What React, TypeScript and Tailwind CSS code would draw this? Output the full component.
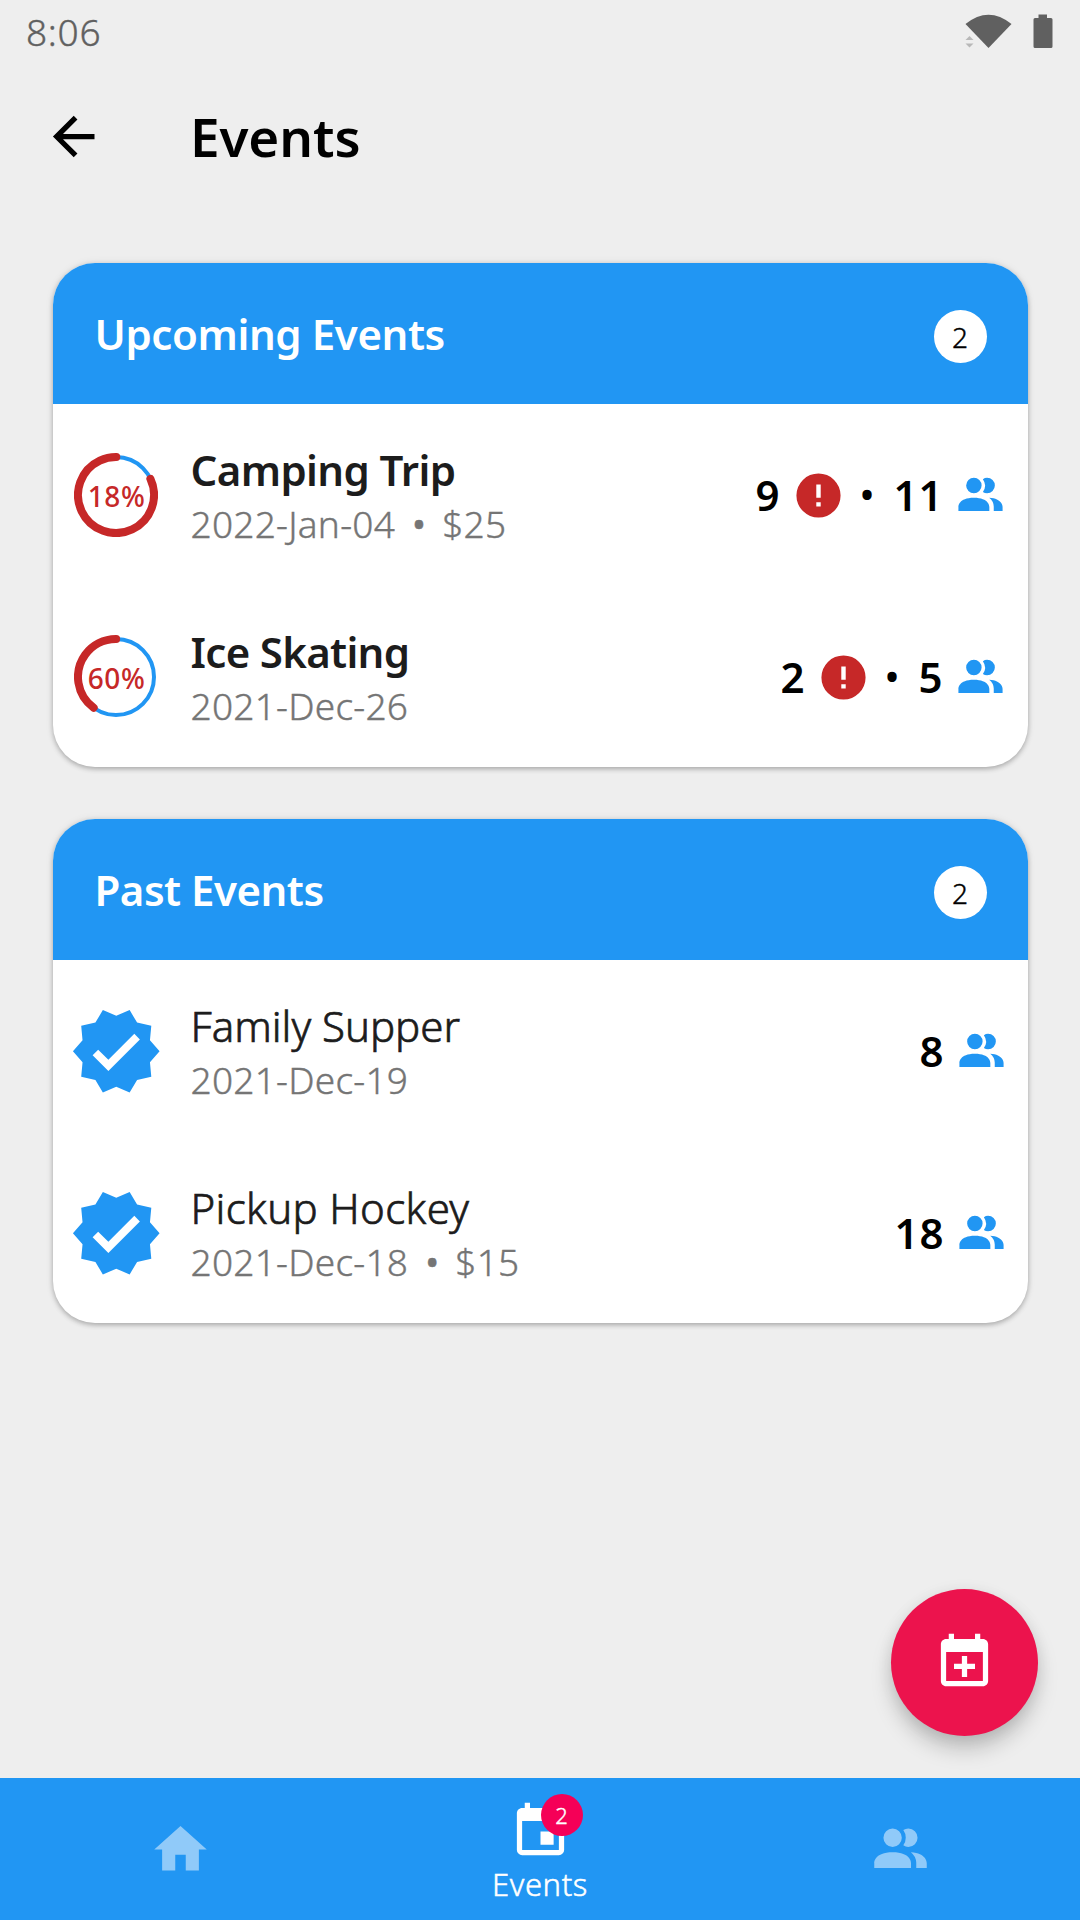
type IconProps = { path: string; className?: string };

const ICONS = {
  back: "M20,11V13H8L13.5,18.5L12.08,19.92L4.16,12L12.08,4.08L13.5,5.5L8,11H20Z",
  people:
    "M16 17V19H2V17S2 13 9 13 16 17 16 17M12.5 7.5A3.5 3.5 0 1 0 9 11A3.5 3.5 0 0 0 12.5 7.5M15.94 13A5.32 5.32 0 0 1 18 17V19H22V17S22 13.37 15.94 13M15 4A3.39 3.39 0 0 0 13.07 4.59A5 5 0 0 1 13.07 10.41A3.39 3.39 0 0 0 15 11A3.5 3.5 0 0 0 15 4Z",
  alert:
    "M13,13H11V7H13M13,17H11V15H13M12,2A10,10 0 0,0 2,12A10,10 0 0,0 12,22A10,10 0 0,0 22,12A10,10 0 0,0 12,2Z",
  verified:
    "M23,12L20.56,9.22L20.9,5.54L17.29,4.72L15.4,1.54L12,3L8.6,1.54L6.71,4.72L3.1,5.53L3.44,9.21L1,12L3.44,14.78L3.1,18.47L6.71,19.29L8.6,22.47L12,21L15.4,22.46L17.29,19.28L20.9,18.46L20.56,14.78L23,12M10,17L6,13L7.41,11.59L10,14.17L16.59,7.58L18,9L10,17Z",
  home: "M10,20V14H14V20H19V12H22L12,3L2,12H5V20H10Z",
  calendar:
    "M19,19H5V8H19M16,1V3H8V1H6V3H5C3.89,3 3,3.89 3,5V19A2,2 0 0,0 5,21H19A2,2 0 0,0 21,19V5C21,3.89 20.1,3 19,3H18V1M17,12H12V17H17V12Z",
  calendarPlus:
    "M19 19V8H5V19H19M16 1H18V3H19C20.11 3 21 3.9 21 5V19C21 20.11 20.11 21 19 21H5C3.89 21 3 20.1 3 19V5C3 3.89 3.89 3 5 3H6V1H8V3H16V1M11 9.5H13V12.5H16V14.5H13V17.5H11V14.5H8V12.5H11V9.5Z",
};

function Icon({ path, className = "" }: IconProps) {
  return (
    <svg viewBox="0 0 24 24" fill="currentColor" fillRule="evenodd" className={`shrink-0 ${className}`}>
      <path d={path} />
    </svg>
  );
}

type EventItem = {
  title: string;
  titleClass: string;
  date: string;
  price?: string;
  progress?: number;
  pending?: number;
  people: number;
};

const UPCOMING: EventItem[] = [
  {
    title: "Camping Trip",
    titleClass: "font-semibold tracking-[-0.6px]",
    date: "2022-Jan-04",
    price: "$25",
    progress: 18,
    pending: 9,
    people: 11,
  },
  {
    title: "Ice Skating",
    titleClass: "font-semibold tracking-[-0.7px]",
    date: "2021-Dec-26",
    progress: 60,
    pending: 2,
    people: 5,
  },
];

const PAST: EventItem[] = [
  {
    title: "Family Supper",
    titleClass: "font-light [-webkit-text-stroke:0.7px]",
    date: "2021-Dec-19",
    people: 8,
  },
  {
    title: "Pickup Hockey",
    titleClass: "font-light tracking-[0.35px] [-webkit-text-stroke:0.7px]",
    date: "2021-Dec-18",
    price: "$15",
    people: 18,
  },
];

function ProgressRing({ value }: { value: number }) {
  const circumference = 2 * Math.PI * 38;
  const rest = circumference * (1 - value / 100);
  return (
    <div className="grid size-[84px] shrink-0 place-items-center">
      <svg viewBox="0 0 84 84" fill="none" className="col-start-1 row-start-1 size-[84px]">
        <circle cx="42" cy="42" r="38" stroke="#2196f3" strokeWidth="4" />
        <circle
          cx="42"
          cy="42"
          r="38"
          stroke="#c62828"
          strokeWidth="8"
          strokeLinecap="round"
          strokeDasharray={`${rest} ${circumference}`}
          transform={`rotate(${-90 + value * 3.6} 42 42)`}
        />
      </svg>
      <span className="col-start-1 row-start-1 pt-px pl-[2px] text-[28px] leading-[40px] font-medium tracking-[0.6px] text-[#c62828]">
        {value}%
      </span>
    </div>
  );
}

function EventRow({ item }: { item: EventItem }) {
  const done = item.progress === undefined;
  return (
    <li className={`flex h-[182px] items-center pl-[16px] ${done ? "pr-[20px]" : "pr-[21px]"}`}>
      <div className="flex w-[122px] shrink-0 items-center">
        {item.progress !== undefined ? (
          <div className="pl-[5px]">
            <ProgressRing value={item.progress} />
          </div>
        ) : (
          <Icon path={ICONS.verified} className="size-[94.5px] text-[#2196f3]" />
        )}
      </div>
      <div className="flex flex-col pt-[2px]">
        <span className={`text-[42px] leading-[56px] text-[#1c1c1c] ${item.titleClass}`}>{item.title}</span>
        <span className="flex text-[37px] leading-[52px] font-light tracking-[0.25px] text-[#757575] [-webkit-text-stroke:0.4px]">
          <span>{item.date}</span>
          {item.price && (
            <>
              <span className="mr-[16px] ml-[17px] font-normal">•</span>
              <span>{item.price}</span>
            </>
          )}
        </span>
      </div>
      <div className="ml-auto flex items-center text-[42px] leading-[56px] font-semibold tracking-[1px] text-black">
        {item.pending !== undefined && (
          <>
            <span>{item.pending}</span>
            <Icon path={ICONS.alert} className="ml-[12px] size-[53px] text-[#c62828]" />
            <span className="mr-[18px] ml-[13px] w-[17px] text-center text-[36px] tracking-normal">•</span>
          </>
        )}
        <span>{item.people}</span>
        <Icon path={ICONS.people} className="ml-[10px] size-[53px] text-[#2196f3]" />
      </div>
    </li>
  );
}

function EventCard({ title, titleClass, items }: { title: string; titleClass: string; items: EventItem[] }) {
  return (
    <section className="overflow-hidden rounded-[42px] bg-white shadow-[0_2px_5px_rgba(0,0,0,0.26),0_0_8px_rgba(0,0,0,0.08)]">
      <header className="flex h-[141px] items-center justify-between bg-[#2196f3] pr-[41px] pl-[42px]">
        <h2 className={`pt-px text-[42px] leading-[56px] font-semibold text-white ${titleClass}`}>{title}</h2>
        <span className="mt-[6px] flex size-[53px] items-center justify-center rounded-full bg-white text-[28px] leading-[40px] font-light text-black [-webkit-text-stroke:0.4px]">
          {items.length}
        </span>
      </header>
      <ul className="h-[363px]">
        {items.map((item) => (
          <EventRow key={item.title} item={item} />
        ))}
      </ul>
    </section>
  );
}

function StatusBar() {
  return (
    <div className="flex h-[63px] items-center justify-between pr-[26px] pl-[26px] text-[#606060]">
      <span className="pt-px text-[37px] leading-[50px] font-light tracking-[0.7px] [-webkit-text-stroke:0.4px]">8:06</span>
      <svg viewBox="0 0 90 36" className="h-[36px] w-[90px]">
        <path d="M1.500 10Q24.500 -8.500 47.500 10L24.500 34Z" fill="#606060" />
        <path d="M1.500 26L5.500 22L9.500 26ZM1.500 29.500H9.500L5.500 33.500Z" fill="#b8b8b8" />
        <path d="M74.500 0.500H83V4H87Q88.500 4 88.500 5.500V32.500Q88.500 34 87 34H71Q69.500 34 69.500 32.500V5.500Q69.500 4 71 4H74.500Z" fill="#606060" />
      </svg>
    </div>
  );
}

export default function App() {
  return (
    <div className="flex h-[1920px] w-[1080px] flex-col overflow-hidden bg-[#eeeeee] font-['Noto_Sans',sans-serif]">
      <StatusBar />
      <header className="flex h-[147px] items-center pl-[42px]">
        <Icon path={ICONS.back} className="size-[63px] text-black" />
        <h1 className="ml-[85px] pt-px text-[53px] leading-[72px] font-semibold tracking-[-0.1px] text-black">Events</h1>
      </header>
      <main className="flex flex-1 flex-col px-[52.500px] pt-[53px]">
        <div className="flex flex-col gap-[52px]">
          <EventCard title="Upcoming Events" titleClass="tracking-[-0.4px]" items={UPCOMING} />
          <EventCard title="Past Events" titleClass="tracking-[-0.5px]" items={PAST} />
        </div>
        <button className="mt-auto -mr-[10.500px] mb-[42px] flex size-[147px] items-center justify-center self-end rounded-full bg-[#ec134d] text-white shadow-[0_14px_22px_-2px_rgba(0,0,0,0.22),0_2px_16px_rgba(0,0,0,0.07)]">
          <Icon path={ICONS.calendarPlus} className="size-[63px]" />
        </button>
      </main>
      <nav className="grid h-[142px] grid-cols-3 bg-[#2196f3] text-white">
        <div className="flex items-center justify-center">
          <Icon path={ICONS.home} className="size-[63px] text-[#90caf9]" />
        </div>
        <div className="flex flex-col items-center pt-[22px]">
          <div className="relative">
            <Icon path={ICONS.calendar} className="size-[63px]" />
            <span className="absolute -top-[6px] left-[32px] flex size-[42px] items-center justify-center rounded-full bg-[#f50057] text-[22px] leading-[30px] font-light [-webkit-text-stroke:0.4px]">
              2
            </span>
          </div>
          <span className="text-[31px] leading-[42px] font-light tracking-[0.6px] [-webkit-text-stroke:0.5px]">Events</span>
        </div>
        <div className="flex items-center justify-center">
          <Icon path={ICONS.people} className="size-[63px] text-[#90caf9]" />
        </div>
      </nav>
    </div>
  );
}
